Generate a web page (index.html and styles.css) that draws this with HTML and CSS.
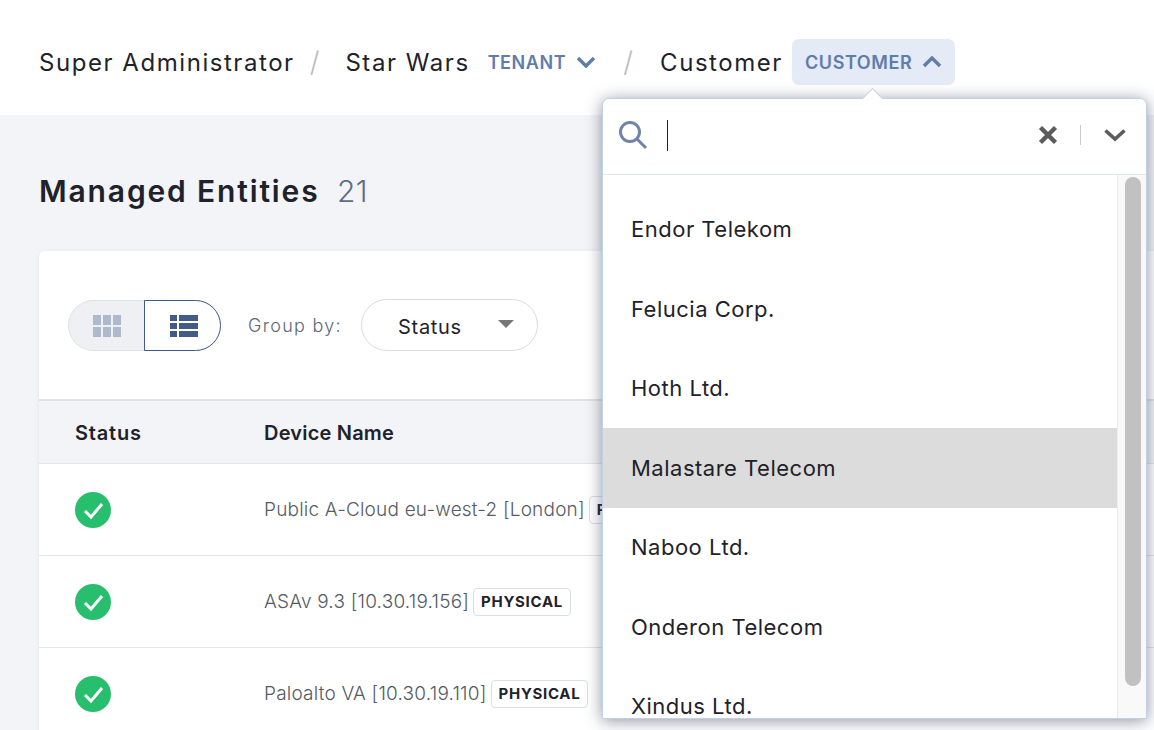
FILE: index.html
```html
<!DOCTYPE html>
<html lang="en">
<head>
<meta charset="utf-8">
<title>Managed Entities</title>
<link rel="stylesheet" href="styles.css">
</head>
<body>
<header class="crumbs">
  <span class="crumb">Super Administrator</span>
  <span class="sep">/</span>
  <span class="crumb">Star Wars</span>
  <button class="scope">TENANT
    <svg class="chev" viewBox="0 0 20 12"><path d="M2 2l8 8 8-8"/></svg>
  </button>
  <span class="sep sep-b">/</span>
  <span class="crumb">Customer</span>
  <button class="scope scope-open">CUSTOMER
    <svg class="chev" viewBox="0 0 20 12"><path d="M2 10l8-8 8 8"/></svg>
  </button>
</header>
<main class="content">
  <h1 class="title">Managed Entities <span class="count">21</span></h1>
  <section class="card">
    <div class="toolbar">
      <div class="views">
        <span class="view">
          <svg width="28" height="22" viewBox="0 0 28 22" class="grid-ic"><path d="M0 0h8v10H0zM10 0h8v10h-8zM20 0h8v10h-8zM0 12h8v10H0zM10 12h8v10h-8zM20 12h8v10h-8z"/></svg>
        </span>
        <span class="view view-on">
          <svg width="28" height="22" viewBox="0 0 28 22" class="list-ic"><path d="M0 0h7v6H0zM9 0h19v6H9zM0 8h7v6H0zM9 8h19v6H9zM0 16h7v6H0zM9 16h19v6H9z"/></svg>
        </span>
      </div>
      <span class="group-label">Group by:</span>
      <div class="select">Status<span class="caret"></span></div>
    </div>
    <div class="thead"><span class="col-status th-status">Status</span><span>Device Name</span></div>
    <div class="row">
      <span class="col-status"><svg class="ok" viewBox="0 0 36 36"><circle cx="18" cy="18" r="18"/><path d="M10 19l6 6 11-13"/></svg></span>
      <span class="dev">Public A-Cloud eu-west-2 [London]</span><span class="tag">PHYSICAL</span>
    </div>
    <div class="row">
      <span class="col-status"><svg class="ok" viewBox="0 0 36 36"><circle cx="18" cy="18" r="18"/><path d="M10 19l6 6 11-13"/></svg></span>
      <span class="dev">ASAv 9.3 [10.30.19.156]</span><span class="tag">PHYSICAL</span>
    </div>
    <div class="row">
      <span class="col-status"><svg class="ok" viewBox="0 0 36 36"><circle cx="18" cy="18" r="18"/><path d="M10 19l6 6 11-13"/></svg></span>
      <span class="dev">Paloalto VA [10.30.19.110]</span><span class="tag">PHYSICAL</span>
    </div>
  </section>
</main>
<div class="menu">
  <span class="arrow"></span>
  <div class="search">
    <svg class="mag" viewBox="0 0 30 30"><circle cx="12" cy="12" r="9.5"/><path d="M19 19l9 9"/></svg>
    <span class="cursor"></span>
    <svg class="clear" viewBox="0 0 20 20"><path d="M2.5 2.5l15 15M17.5 2.5l-15 15"/></svg>
    <span class="divider"></span>
    <svg class="down" viewBox="0 0 24 14"><path d="M2.500 2.500l9.500 8.500 9.500-8.500"/></svg>
  </div>
  <div class="list">
    <ul class="options">
      <li>Endor Telekom</li>
      <li>Felucia Corp.</li>
      <li>Hoth Ltd.</li>
      <li class="hover">Malastare Telecom</li>
      <li>Naboo Ltd.</li>
      <li>Onderon Telecom</li>
      <li>Xindus Ltd.</li>
    </ul>
    <div class="track"><span class="thumb"></span></div>
  </div>
</div>
</body>
</html>
```
FILE: styles.css
```css
* { box-sizing: border-box; }
html, body { height: 730px; }
body {
  margin: 0;
  overflow: hidden;
  position: relative;
  background: #f3f4f8;
  font-family: Inter, "Liberation Sans", sans-serif;
  color: #1f2229;
}
.crumbs {
  height: 115px;
  background: #fff;
  display: flex;
  align-items: center;
  padding: 9px 0 0 39px;
}
.crumb { font-size: 24px; letter-spacing: 1.55px; white-space: nowrap; }
.sep { color: #bbb; font-size: 28px; font-weight: 300; margin: 0 26px 0 15px; }
.sep-b { margin: 0 27px 0 0; }
.scope {
  border: 0;
  background: transparent;
  font-family: inherit;
  color: #5f7cab;
  font-size: 18px;
  font-weight: 600;
  letter-spacing: 0.6px;
  height: 46px;
  border-radius: 7px;
  padding: 0 13px;
  margin: 0 14px 0 5px;
  display: flex;
  align-items: center;
  gap: 10px;
}
.scope-open { background: #e4eaf6; margin: 0 0 0 9px; }
.chev { width: 20px; height: 12px; fill: none; stroke: #5f7cab; stroke-width: 3.4; }
.content { padding: 55px 0 0 39px; }
.title { margin: 0; font-size: 30px; line-height: 42px; font-weight: 600; letter-spacing: 1.85px; color: #1f2229; }
.count { font-size: 30px; font-weight: 300; color: #5f6c85; letter-spacing: .5px; margin-left: 8px; }
.card { margin-top: 39px; width: 1200px; background: #fff; border-radius: 6px 0 0 0; box-shadow: 0 1px 4px rgba(40,50,80,.08); }
.toolbar { height: 148px; display: flex; align-items: center; padding: 0 0 0 29px; }
.views { display: flex; width: 153px; height: 51px; border-radius: 26px; background: #eef0f3; border: 1px solid #dfe1e5; margin-top: 1px; }
.view { width: 75px; display: flex; align-items: center; justify-content: center; }
.view-on { width: 77px; margin: -1px -1px -1px 0; padding-left: 2px; background: #fff; border: 1px solid #3f5a88; border-radius: 0 26px 26px 0; }
.grid-ic { fill: #b0b8cb; }
.list-ic { fill: #445b87; }
.group-label { margin-left: 27px; font-size: 18px; font-weight: 300; color: #5d6675; letter-spacing: 1.3px; }
.select { position: relative; width: 177px; height: 52px; margin-left: 19px; border: 1px solid #dcdcdc; border-radius: 26px; padding: 3px 0 0 36px; display: flex; align-items: center; font-size: 20px; letter-spacing: .7px; }
.caret { position: absolute; right: 23px; top: 20px; width: 0; height: 0; border-left: 8px solid transparent; border-right: 8px solid transparent; border-top: 8px solid #777; }
.thead { height: 65px; display: flex; align-items: center; background: #f3f4f8; border-top: 2px solid #e2e2e4; border-bottom: 1px solid #e3e4e8; font-size: 20px; font-weight: 600; letter-spacing: .2px; padding: 2px 0 0 36px; }
.col-status { width: 189px; flex: none; display: flex; align-items: center; }
.th-status { letter-spacing: .8px; }
.row { height: 92px; display: flex; align-items: center; padding-left: 36px; border-bottom: 1px solid #e3e4e8; }
.ok { width: 36px; height: 36px; }
.ok circle { fill: #27bf6d; }
.ok path { fill: none; stroke: #fff; stroke-width: 3; }
.dev { font-size: 19px; font-weight: 300; color: #555b63; letter-spacing: .2px; white-space: nowrap; }
.tag { margin-left: 4px; height: 28px; padding: 0 7px; border: 1px solid #d9dee8; border-radius: 4px; display: flex; align-items: center; font-size: 15px; font-weight: 700; letter-spacing: .7px; color: #1f2229; }
.menu {
  position: absolute;
  left: 602px;
  top: 98px;
  width: 545px;
  height: 621px;
  background: #fff;
  border: 1px solid #c3cfe2;
  border-radius: 7px 7px 0 0;
  box-shadow: 0 2px 16px rgba(50,60,90,.55);
  display: flex;
  flex-direction: column;
}
.arrow { position: absolute; left: 262px; top: -8px; width: 15px; height: 15px; background: #fff; border-left: 1px solid #c3cfe2; border-top: 1px solid #c3cfe2; transform: rotate(45deg); }
.search { position: relative; height: 76px; flex: none; display: flex; align-items: center; padding: 0 0 3px 15px; border-bottom: 1px solid #e1e6ef; background: #fff; border-radius: 7px 7px 0 0; }
.mag { width: 30px; height: 30px; fill: none; stroke: #6f84a8; stroke-width: 3; }
.cursor { width: 1px; height: 31px; margin-left: 19px; background: #1f2229; }
.clear { width: 20px; height: 20px; margin-left: auto; fill: none; stroke: #5c5c5c; stroke-width: 4.5; }
.divider { width: 1px; height: 20px; margin: 0 22px 0 22px; background: #ccc; }
.down { width: 24px; height: 14px; margin-right: 19px; fill: none; stroke: #5c5c5c; stroke-width: 3.6; }
.list { flex: 1; display: flex; min-height: 0; overflow: hidden; }
.options { list-style: none; margin: 0; padding: 14.5px 0 0; flex: 1; }
.options li { height: 79.5px; display: flex; align-items: center; padding-left: 28px; font-size: 22px; color: #1f2229; letter-spacing: .5px; }
.options .hover { background: #dcdcdc; }
.track { width: 29px; flex: none; background: #f9f9f9; border-left: 1px solid #ececec; padding: 2px 5px 0 7px; }
.thumb { display: block; width: 16px; height: 509px; border-radius: 8px; background: #c1c1c1; }
```
